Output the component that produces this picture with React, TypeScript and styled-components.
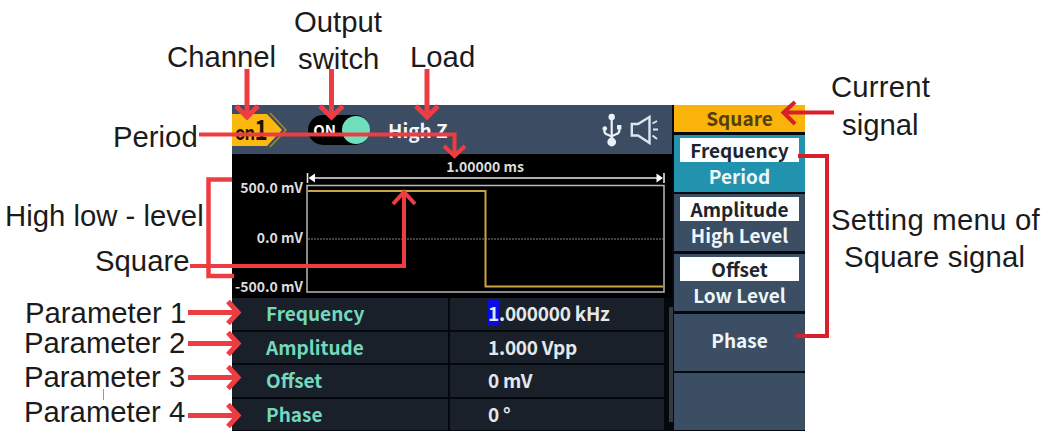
import React from 'react';
import styled, { createGlobalStyle } from 'styled-components';

const parameters = [
  { name: 'Frequency', cursor: '1', value: '.000000 kHz' },
  { name: 'Amplitude', value: '1.000 Vpp' },
  { name: 'Offset', value: '0 mV' },
  { name: 'Phase', value: '0 °' },
];

const menu = [
  { selected: 'Frequency', other: 'Period', active: true },
  { selected: 'Amplitude', other: 'High Level' },
  { selected: 'Offset', other: 'Low Level' },
  { other: 'Phase' },
  {},
];

// left edge, baseline
const callouts = [
  { text: 'Output', x: 294, y: 31.5 },
  { text: 'switch', x: 298, y: 69 },
  { text: 'Channel', x: 167, y: 66.5 },
  { text: 'Load', x: 410, y: 66.5 },
  { text: 'Period', x: 113, y: 146.5 },
  { text: 'High low - level', x: 5, y: 226 },
  { text: 'Square', x: 95, y: 271 },
  { text: 'Parameter 1', x: 25, y: 323 },
  { text: 'Parameter 2', x: 24, y: 353 },
  { text: 'Parameter 3', x: 24, y: 387 },
  { text: 'Parameter 4', x: 24, y: 421.5 },
  { text: 'Current', x: 831, y: 97, spacing: 0.2 },
  { text: 'signal', x: 842, y: 135 },
  { text: 'Setting menu of', x: 831, y: 230, spacing: 0.25 },
  { text: 'Square signal', x: 844, y: 267, spacing: 0.15 },
];

const UsbIcon = () => (
  <svg width='20' height='34' viewBox='0 0 20 34' fill='none' stroke='#e9f1f8' strokeWidth='2.2'>
    <path d='M9.7 4V29' />
    <path d='M2.4 15V18Q2.4 21 5.5 21.6L9.7 23.5' />
    <path d='M17.4 14V17Q17.4 20.5 14 21.3L9.7 23.3' />
    <circle cx='9.7' cy='4' r='3.2' fill='#e9f1f8' stroke='none' />
    <circle cx='9.7' cy='29' r='4.4' fill='#e9f1f8' stroke='none' />
    <circle cx='2.8' cy='15.5' r='2.3' fill='#e9f1f8' stroke='none' />
    <rect x='15' y='12' width='4.4' height='4.4' fill='#e9f1f8' stroke='none' />
  </svg>
);

const SpeakerIcon = () => (
  <svg width='30' height='30' viewBox='0 0 30 30' fill='none' stroke='#dde6ef' strokeWidth='2.4'>
    <path d='M2.8 9V20.5H9L20.5 28V2L9 9Z' />
    <path d='M23.5 8.5L28 6M24 14.5H29M23.5 20.5L28 24' strokeWidth='2' />
  </svg>
);

const App = () => (
  <>
    <GlobalStyle />
    <Figure>
      <Device>
        <Screen>
          <StatusBar>
            <ChannelBadge>
              <svg width='56' height='36' viewBox='0 0 56 36'>
                <path d='M38 1L54 18L38 35' fill='none' stroke='#a58c2c' strokeWidth='1.5' />
                <path d='M0 2H35L50 18L35 34H0Z' fill='#fbb80f' />
              </svg>
              <ChannelText>
                <small>on</small>1
              </ChannelText>
            </ChannelBadge>
            <Toggle>
              ON
              <Knob />
            </Toggle>
            <LoadText>High Z</LoadText>
            <StatusIcons>
              <UsbIcon />
              <SpeakerIcon />
            </StatusIcons>
          </StatusBar>

          <Plot>
            <Scale>
              <span>500.0 mV</span>
              <span>0.0 mV</span>
              <span>-500.0 mV</span>
            </Scale>
            <Wave>
              <PeriodText>1.00000 ms</PeriodText>
              <svg width='360' height='124' viewBox='0 0 360 124' fill='none'>
                <path d='M1.5 1V11M358 1V11M4 6H356' stroke='#e8e8e8' strokeWidth='1.6' />
                <path d='M2.5 6L9 1.5V10.5ZM357 6L350.5 1.5V10.5Z' fill='#fff' />
                <rect x='1' y='13.5' width='357' height='106.5' stroke='#b9b9b9' strokeWidth='1.5' />
                <path d='M2 67H357' stroke='#858585' strokeDasharray='2 1' />
                <path d='M2 19H179.5V114.5H357' stroke='#cba347' strokeWidth='2' />
              </svg>
            </Wave>
          </Plot>

          <Table>
            <Rows>
              {parameters.map((item) => (
                <Row key={item.name}>
                  <Name>{item.name}</Name>
                  <Value>
                    {item.cursor && <Cursor>{item.cursor}</Cursor>}
                    {item.value}
                  </Value>
                </Row>
              ))}
            </Rows>
            <Scrollbar />
          </Table>
        </Screen>

        <Menu>
          <MenuTitle>Square</MenuTitle>
          {menu.map((item, index) => (
            <MenuItem key={index} $active={item.active}>
              {item.selected && <Selected>{item.selected}</Selected>}
              {item.other && <Other $alone={!item.selected}>{item.other}</Other>}
            </MenuItem>
          ))}
        </Menu>
      </Device>

      {callouts.map((item) => (
        <Callout key={item.text} $x={item.x} $y={item.y} $spacing={item.spacing}>
          {item.text}
        </Callout>
      ))}

      <Arrows viewBox='0 0 1042 431'>
        <g stroke='#ee3c43' strokeWidth='5'>
          <path d='M247 69V116M236 106L247 117L258 106' />
          <path d='M331.5 69V116M320 106L331.5 117L343 106' />
          <path d='M427 69V116M416 106L427 117L438 106' />
          <path d='M199 134.5H454.5V155M444 146L454.5 156L465 146' strokeWidth='4' />
          <path d='M190 266H404V193M393 204L404 192L415 204' strokeWidth='4' />
          <path d='M232 179.5H208.5V276H234' strokeWidth='4.5' />
          <path d='M188 312.5H238M228 301.5L238 312.5L228 323.5' />
          <path d='M188 343.5H238M228 332.5L238 343.5L228 354.5' />
          <path d='M188 377.5H238M228 366.5L238 377.5L228 388.5' />
          <path d='M188 415.5H238M228 404.5L238 415.5L228 426.5' />
        </g>
        <g stroke='#d9202a' strokeWidth='4'>
          <path d='M834 112.5H785M795 102L783.5 112.5L795 124' />
          <path d='M798 156H827V336H796' />
        </g>
        <path d='M103.5 389V400' stroke='#999' strokeWidth='1' />
      </Arrows>
    </Figure>
  </>
);

export default App;

const GlobalStyle = createGlobalStyle`
  body {
    margin: 0;
    background-color: #fff;
  }
`;

const Figure = styled.div`
  position: relative;
  box-sizing: border-box;
  width: 1042px;
  height: 431px;
  padding: 105px 0 0 232px;
  overflow: hidden;
`;

const Device = styled.div`
  display: flex;
  width: 573px;
  height: 326px;
  background-color: #05080c;
  font-family: 'Noto Sans CJK SC', 'Noto Sans', sans-serif;
  font-weight: 700;
`;

const Screen = styled.div`
  display: flex;
  flex-direction: column;
  width: 442px;
`;

const StatusBar = styled.div`
  display: flex;
  align-items: center;
  width: 440px;
  height: 49px;
  background-color: #3c4c63;
`;

const ChannelBadge = styled.div`
  position: relative;
  height: 36px;
  margin-right: 20px;
`;

const ChannelText = styled.div`
  position: absolute;
  top: 2px;
  left: 3px;
  color: #1c1400;
  font-size: 27px;
  line-height: 30px;
  letter-spacing: -1px;
  transform: scaleX(0.83);
  transform-origin: left;

  small {
    font-size: 20px;
  }
`;

const Toggle = styled.div`
  display: flex;
  align-items: center;
  justify-content: flex-end;
  gap: 6px;
  width: 62px;
  height: 30px;
  border-radius: 15px;
  background-color: #000;
  color: #fff;
  font-size: 15px;
`;

const Knob = styled.div`
  width: 28px;
  height: 28px;
  border-radius: 50%;
  background-color: #6fe0be;
`;

const LoadText = styled.div`
  flex: 1;
  margin-left: 18px;
  color: #f3f6fa;
  font-size: 19px;
  line-height: 24px;
`;

const StatusIcons = styled.div`
  display: flex;
  align-items: center;
  gap: 7px;
  padding-right: 13px;
`;

const Plot = styled.div`
  display: flex;
  width: 440px;
  height: 144px;
  background-color: #000;
  color: #dcdcdc;
  font-size: 14px;
`;

const Scale = styled.div`
  display: flex;
  flex-direction: column;
  justify-content: space-between;
  align-items: flex-end;
  box-sizing: border-box;
  width: 74px;
  padding: 23px 3px 2px 0;
  line-height: 20px;
  white-space: nowrap;
`;

const Wave = styled.div`
  display: flex;
  flex-direction: column;
  width: 360px;
`;

const PeriodText = styled.div`
  height: 18px;
  padding-right: 2px;
  line-height: 24px;
  text-align: center;
`;

const Table = styled.div`
  display: flex;
  gap: 5px;
  height: 133px;
`;

const Rows = styled.div`
  display: flex;
  flex-direction: column;
  gap: 2px;
  width: 432px;
`;

const Row = styled.div`
  display: flex;
  gap: 2px;
  height: 31.5px;
  font-size: 19px;
  line-height: 30px;
`;

const Name = styled.div`
  box-sizing: border-box;
  width: 216px;
  padding-left: 34px;
  background-color: #19202a;
  color: #74d8bd;
`;

const Value = styled.div`
  flex: 1;
  padding-left: 38px;
  background-color: #19202a;
  color: #e4e8ec;
  letter-spacing: -0.25px;
`;

const Cursor = styled.span`
  background-color: #0a0ae6;
`;

const Scrollbar = styled.div`
  width: 4px;
  height: 115px;
  margin-top: 9px;
  background-color: #343c42;
`;

const Menu = styled.div`
  display: flex;
  flex-direction: column;
  gap: 2.5px;
  width: 131px;
`;

const MenuTitle = styled.div`
  height: 27px;
  background-color: #fab30b;
  color: #54400c;
  font-size: 19px;
  line-height: 25px;
  text-align: center;
`;

const MenuItem = styled.div<{ $active?: boolean }>`
  display: flex;
  flex-direction: column;
  justify-content: center;
  height: 57.2px;
  background-color: ${({ $active }) => ($active ? '#2193ae' : '#3b4e64')};
  color: #eef6fa;
  font-size: 19px;
  text-align: center;
`;

const Selected = styled.div`
  margin: 0 6px;
  height: 24px;
  background-color: #fcfeff;
  color: #1d242b;
  line-height: 24px;
`;

const Other = styled.div<{ $alone?: boolean }>`
  height: 27px;
  padding-bottom: ${({ $alone }) => ($alone ? 6 : 0)}px;
  line-height: 27px;
`;

const Callout = styled.div<{ $x: number; $y: number; $spacing?: number }>`
  position: absolute;
  top: ${({ $y }) => $y - 27}px;
  left: ${({ $x }) => $x}px;
  color: #1b1b1b;
  font-family: 'Liberation Sans', Arial, sans-serif;
  font-size: 29.3px;
  line-height: 34px;
  letter-spacing: ${({ $spacing = 0 }) => $spacing}px;
  white-space: nowrap;
`;

const Arrows = styled.svg`
  position: absolute;
  top: 0;
  left: 0;
  width: 1042px;
  height: 431px;
  fill: none;
  stroke-linejoin: miter;
  pointer-events: none;
`;
